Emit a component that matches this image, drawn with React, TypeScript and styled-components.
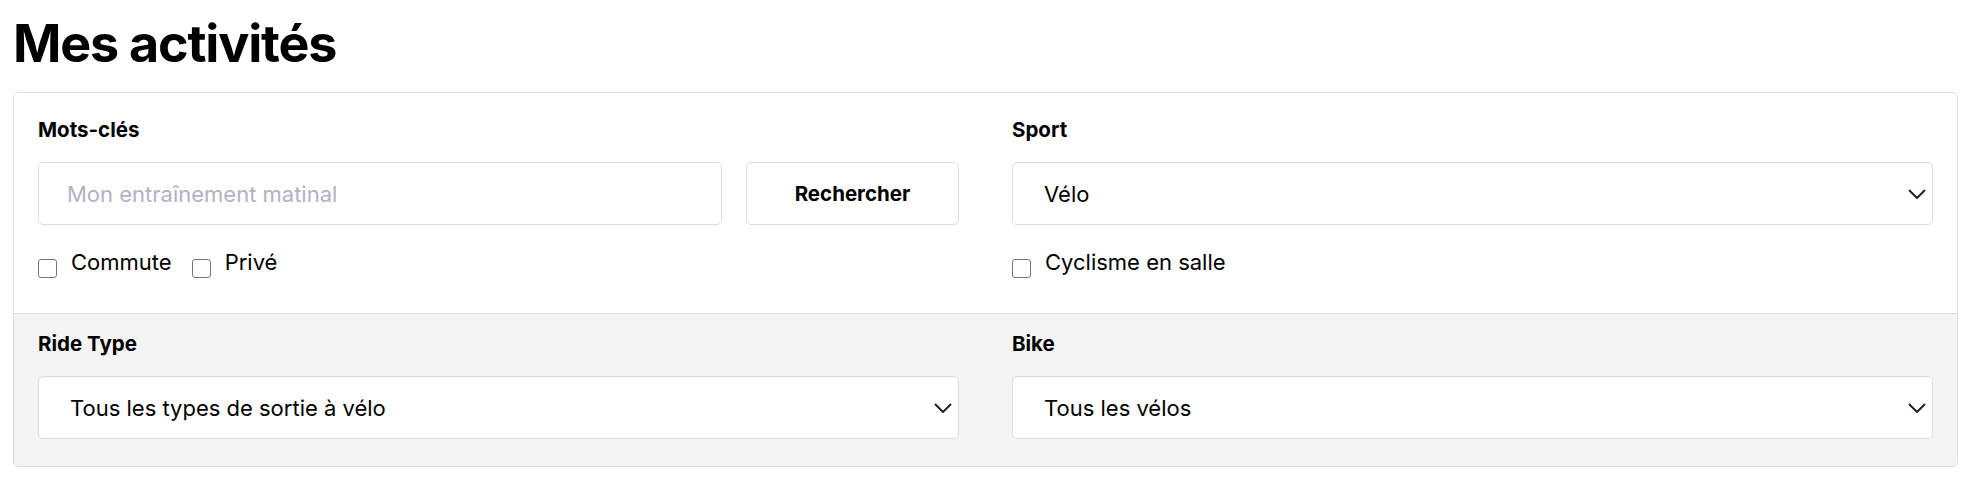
import React from "react";
import styled, { createGlobalStyle } from "styled-components";

const GlobalStyle = createGlobalStyle`
  html, body { margin: 0; padding: 0; background: #ffffff; }
  body { font-family: Inter, "Noto Sans", "Liberation Sans", sans-serif; color: #000; }
  * { box-sizing: border-box; }
`;

const Page = styled.div`
  width: 1974px;
  padding: 10px 16px 0 13px;
`;

const Title = styled.h1`
  margin: 0 0 15px 0;
  font-size: 52px;
  line-height: 67px;
  font-weight: 700;
  letter-spacing: -1.2px;
`;

const Panel = styled.section`
  border: 1px solid #dedede;
  border-radius: 5px;
  overflow: hidden;
`;

const Section = styled.div<{ $muted?: boolean }>`
  display: grid;
  grid-template-columns: 1fr 1fr;
  column-gap: 53px;
  padding: ${(p) => (p.$muted ? "17px 24px 27px" : "24px 24px 35px")};
  background: ${(p) => (p.$muted ? "#f4f4f4" : "#ffffff")};
  border-top: ${(p) => (p.$muted ? "1px solid #dedede" : "none")};
`;

const Field = styled.div`
  display: flex;
  flex-direction: column;
`;

const Label = styled.label`
  font-size: 20.5px;
  line-height: 26px;
  font-weight: 700;
  margin-bottom: 19px;
`;

const InputRow = styled.div`
  display: flex;
  gap: 24px;
`;

const TextInput = styled.input`
  flex: 1;
  height: 63px;
  border: 1px solid #dddde4;
  border-radius: 5px;
  padding: 0 28px;
  font-family: inherit;
  font-size: 22px;
  color: #000;
  background: #fff;
  outline: none;
  &::placeholder { color: #b3b1c2; }
`;

const Button = styled.button`
  width: 213px;
  height: 63px;
  border: 1px solid #dddde4;
  border-radius: 5px;
  background: #fff;
  font-family: inherit;
  font-size: 20.5px;
  font-weight: 700;
  color: #000;
  cursor: pointer;
`;

const SelectBox = styled.div`
  position: relative;
  height: 63px;
  border: 1px solid #dddde4;
  border-radius: 5px;
  background: #fff;
  box-shadow: inset 0 1px 1px rgba(80, 80, 120, 0.06);
  display: flex;
  align-items: center;
  padding: 0 40px 0 31px;
  font-size: 22px;
  color: #000;
`;

const Chevron = styled.svg`
  position: absolute;
  right: 6px;
  top: 50%;
  margin-top: -5px;
  width: 18px;
  height: 10px;
`;

const CheckRow = styled.div`
  display: flex;
  align-items: flex-start;
  gap: 20px;
  margin-top: 24px;
`;

const CheckItem = styled.label`
  display: flex;
  align-items: flex-start;
  gap: 14px;
  font-size: 22px;
  line-height: 26px;
`;

const Box = styled.span`
  width: 19px;
  height: 19px;
  margin-top: 10px;
  border: 1.5px solid #767676;
  border-radius: 3px;
  background: #fff;
  flex-shrink: 0;
`;

const Select = ({ value }: { value: string }) => (
  <SelectBox>
    {value}
    <Chevron viewBox="0 0 18 10" fill="none">
      <polyline points="1,1 9,9 17,1" stroke="#222" strokeWidth="2" />
    </Chevron>
  </SelectBox>
);

const Check = ({ label }: { label: string }) => (
  <CheckItem>
    <Box />
    {label}
  </CheckItem>
);

export default function App() {
  return (
    <Page>
      <GlobalStyle />
      <Title>Mes activités</Title>
      <Panel>
        <Section>
          <Field>
            <Label>Mots-clés</Label>
            <InputRow>
              <TextInput placeholder="Mon entraînement matinal" />
              <Button>Rechercher</Button>
            </InputRow>
            <CheckRow>
              <Check label="Commute" />
              <Check label="Privé" />
            </CheckRow>
          </Field>
          <Field>
            <Label>Sport</Label>
            <Select value="Vélo" />
            <CheckRow>
              <Check label="Cyclisme en salle" />
            </CheckRow>
          </Field>
        </Section>
        <Section $muted>
          <Field>
            <Label>Ride Type</Label>
            <Select value="Tous les types de sortie à vélo" />
          </Field>
          <Field>
            <Label>Bike</Label>
            <Select value="Tous les vélos" />
          </Field>
        </Section>
      </Panel>
    </Page>
  );
}
